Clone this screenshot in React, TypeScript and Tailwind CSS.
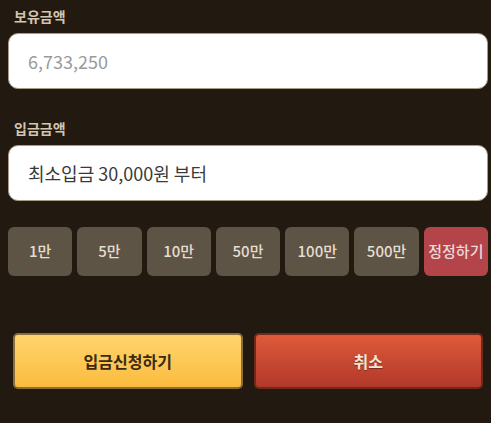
const amounts = ["1만", "5만", "10만", "50만", "100만", "500만"];

const font = "font-['Noto_Sans_CJK_KR','Noto_Sans',sans-serif]";

const Field = ({ label, value, muted }: { label: string; value: string; muted?: boolean }) => (
  <div className="flex flex-col">
    <div className="h-[29px] pl-[6px] pt-[2px] text-[14px] font-bold leading-[20px] text-[#d3c5b1]">
      {label}
    </div>
    <div className="flex h-[56px] items-center rounded-[10px] border border-[#a89a86] bg-white pl-[19px]">
      <span className={`text-[18px] ${muted ? "text-[#9a9a9a]" : "text-[#3a3a3a]"}`}>{value}</span>
    </div>
  </div>
);

export default function App() {
  return (
    <div className={`h-[423px] w-[491px] bg-[#221910] pl-[8px] pr-[3px] pt-[4px] ${font}`}>
      <Field label="보유금액" value="6,733,250" muted />
      <div className="h-[27px]" />
      <Field label="입금금액" value="최소입금 30,000원 부터" />

      <div className="mt-[26px] grid grid-cols-7 gap-[5px]">
        {amounts.map((a) => (
          <button
            key={a}
            className="h-[49px] rounded-[6px] bg-[#5e5446] text-[15px] font-medium text-[#e6ddcf]"
          >
            {a}
          </button>
        ))}
        <button className="h-[49px] rounded-[6px] bg-[#b3444a] text-[15px] font-medium text-[#ecd9d9]">
          정정하기
        </button>
      </div>

      <div className="mt-[57px] flex gap-[11px] pl-[5px] pr-[5px]">
        <button className="h-[56px] flex-1 rounded-[5px] border-2 border-[#8a6d3c] bg-gradient-to-b from-[#ffd46c] to-[#fbbc3c] text-[16px] font-bold text-[#3a2a12]">
          입금신청하기
        </button>
        <button className="h-[56px] flex-1 rounded-[5px] border-2 border-[#6e2a1c] bg-gradient-to-b from-[#de5a3a] to-[#b2382a] text-[16px] font-bold text-[#f3e3d8] [text-shadow:0_1px_1px_rgba(0,0,0,0.4)]">
          취소
        </button>
      </div>
    </div>
  );
}
